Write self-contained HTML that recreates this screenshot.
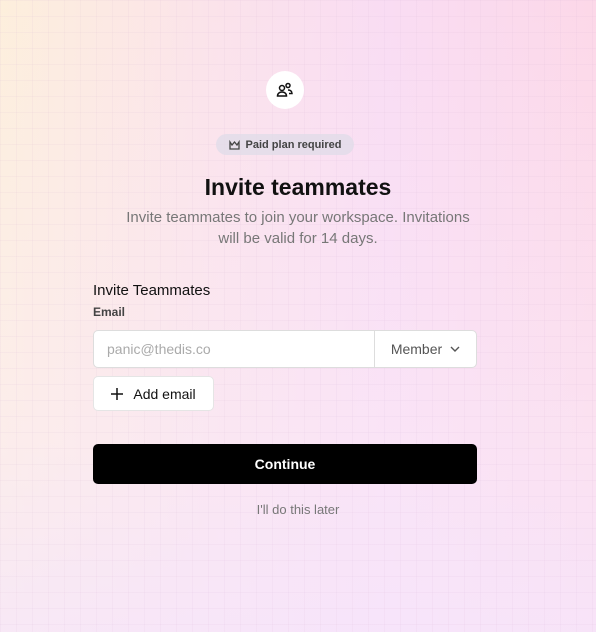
<!DOCTYPE html>
<html><head><style>
*{margin:0;padding:0;box-sizing:border-box}
body{width:596px;height:632px;overflow:hidden;font-family:"Liberation Sans",sans-serif;position:relative;
background:linear-gradient(90deg,#fdefdc 0%,#fbe3ea 35%,#f9dcf3 65%,#fcd8e8 100%);}
.ov{position:absolute;inset:0;background:linear-gradient(180deg,rgba(255,255,255,0) 0%,rgba(250,235,250,0.5) 70%,rgba(246,230,252,0.8) 100%);}
.grid{position:absolute;inset:0;background-image:linear-gradient(rgba(200,160,200,0.08) 1px,transparent 1px),linear-gradient(90deg,rgba(200,160,200,0.08) 1px,transparent 1px);background-size:16px 16px;}
.c{position:absolute;}
</style></head><body>
<div class="ov"></div><div class="grid"></div>
<div class="c" style="left:266px;top:71px;width:38px;height:38px;border-radius:50%;background:#fff;display:flex;align-items:center;justify-content:center">
<svg width="18" height="16" viewBox="0 0 18 16" fill="none" stroke="#111" stroke-width="1.5"><circle cx="6" cy="6" r="2.5"/><path d="M1.5 14c0-2.5 2-4 4.5-4s4.5 1.5 4.5 4z"/><circle cx="12" cy="3.5" r="2"/><path d="M12 8c2.5 0 4 1.3 4 3.5h-3"/></svg></div>
<div class="c" style="left:216px;top:134px;width:138px;height:21px;border-radius:11px;background:rgba(225,220,232,0.8);font-size:11px;font-weight:bold;color:#444;display:flex;align-items:center;justify-content:center;gap:6px">
<svg width="11" height="10" viewBox="0 0 11 10" fill="none" stroke="#444" stroke-width="1.3"><path d="M1 2l2 3 2.5-3 2.5 3 2-3v7H1z"/></svg>Paid plan required</div>
<div class="c" style="left:0;width:596px;top:174px;text-align:center;font-size:23px;font-weight:bold;color:#111">Invite teammates</div>
<div class="c" style="left:103px;width:390px;top:207px;text-align:center;font-size:15px;line-height:21px;color:#777">Invite teammates to join your workspace. Invitations<br>will be valid for 14 days.</div>
<div class="c" style="left:93px;top:282px;font-size:15px;color:#111">Invite Teammates</div>
<div class="c" style="left:93px;top:305px;font-size:12px;font-weight:bold;color:#444">Email</div>
<div class="c" style="left:93px;top:330px;width:384px;height:38px;background:#fff;border:1px solid #ddd;border-radius:5px;display:flex;align-items:center">
<div style="flex:1;padding-left:13px;font-size:14px;color:#aaa">panic@thedis.co</div>
<div style="width:102px;height:100%;border-left:1px solid #ddd;display:flex;align-items:center;justify-content:center;gap:8px;font-size:14px;color:#555">Member <svg width="10" height="6" viewBox="0 0 10 6" fill="none" stroke="#555" stroke-width="1.4"><path d="M1 1l4 4 4-4"/></svg></div></div>
<div class="c" style="left:93px;top:376px;width:121px;height:35px;background:#fff;border:1px solid #e5e5e5;border-radius:5px;display:flex;align-items:center;justify-content:center;gap:10px;font-size:14px;color:#111">
<svg width="12" height="12" viewBox="0 0 12 12" stroke="#111" stroke-width="1.5"><path d="M6 0v12M0 6h12"/></svg>Add email</div>
<div class="c" style="left:93px;top:444px;width:384px;height:40px;background:#000;border-radius:5px;color:#fff;font-size:14px;font-weight:bold;display:flex;align-items:center;justify-content:center">Continue</div>
<div class="c" style="left:0;width:596px;top:502px;text-align:center;font-size:13px;color:#777">I'll do this later</div>
</body></html>
